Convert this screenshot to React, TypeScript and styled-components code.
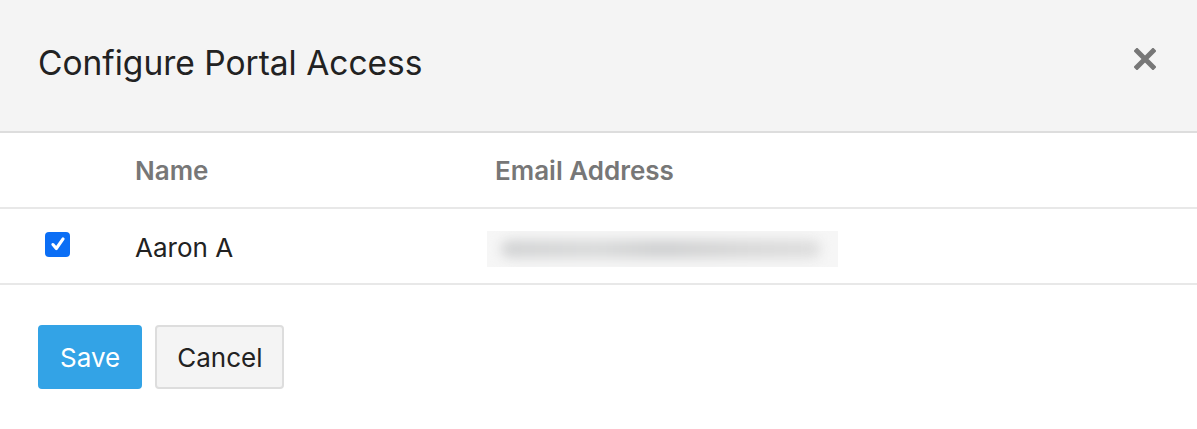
import React from 'react';
import styled, { createGlobalStyle } from 'styled-components';

const GlobalStyle = createGlobalStyle`
    html, body {
        margin: 0;
        padding: 0;
        background: #ffffff;
        font-family: Inter, "Noto Sans", sans-serif;
    }
`;

const Modal = styled.div`
    width: 1197px;
    height: 429px;
    background: #ffffff;
    display: flex;
    flex-direction: column;
`;

const ModalHeader = styled.div`
    height: 131px;
    background: #f4f4f4;
    border-bottom: 2px solid #dddddd;
    display: flex;
    align-items: center;
    justify-content: space-between;
    padding: 0 38px;
    box-sizing: content-box;
`;

const Title = styled.h2`
    margin: -5px 0 0;
    font-size: 33.5px;
    font-weight: 400;
    color: #222222;
`;

const CloseButton = styled.button`
    border: none;
    background: transparent;
    padding: 0;
    width: 24px;
    height: 24px;
    display: flex;
    align-items: center;
    justify-content: center;
    cursor: pointer;
    margin: -14px 2px 0 0;
`;

const Table = styled.div`
    display: flex;
    flex-direction: column;
`;

const Row = styled.div<{ $height: number }>`
    display: grid;
    grid-template-columns: 135px 360px 1fr;
    align-items: center;
    height: ${p => p.$height}px;
    border-bottom: 2px solid #e8e8e8;
    box-sizing: border-box;
`;

const HeadCell = styled.div`
    font-size: 26px;
    font-weight: 600;
    color: #777777;
`;

const Cell = styled.div`
    font-size: 26px;
    color: #222222;
    margin-top: 2px;
`;

const CheckCell = styled.div`
    padding-left: 45px;
    display: flex;
    align-items: center;
    margin-top: -4px;
`;

const CheckBox = styled.span`
    width: 25px;
    height: 25px;
    border-radius: 4px;
    background: #0b6ef5;
    display: flex;
    align-items: center;
    justify-content: center;
`;

const BlurWrap = styled.div`
    margin: 6px 0 0 -8px;
    width: 351px;
    height: 36px;
    background: #f6f6f6;
    overflow: hidden;
    display: flex;
    align-items: center;
`;

const BlurBar = styled.div`
    margin-left: 14px;
    width: 320px;
    height: 18px;
    border-radius: 9px;
    background: linear-gradient(90deg, #d2d3d4 0%, #d9dada 30%, #cfd0d1 50%, #d8d8d8 75%, #dedede 100%);
    filter: blur(6px);
`;

const Footer = styled.div`
    display: flex;
    gap: 13px;
    padding: 40px 38px 0;
`;

const Button = styled.button<{ $primary?: boolean }>`
    height: 64px;
    padding: 0 20px;
    font-family: Inter, "Noto Sans", sans-serif;
    font-size: 26px;
    border-radius: 4px;
    cursor: pointer;
    color: ${p => (p.$primary ? '#ffffff' : '#222222')};
    background: ${p => (p.$primary ? '#33a3e6' : '#f4f4f4')};
    border: 2px solid ${p => (p.$primary ? '#33a3e6' : '#dddddd')};
`;

const App: React.FC = () => {
    return (
        <Modal>
            <GlobalStyle />
            <ModalHeader>
                <Title>Configure Portal Access</Title>
                <CloseButton aria-label="Close">
                    <svg width="22" height="22" viewBox="0 0 22 22">
                        <path d="M3 3 L19 19 M19 3 L3 19" stroke="#777777" strokeWidth="5" strokeLinecap="square" />
                    </svg>
                </CloseButton>
            </ModalHeader>
            <Table>
                <Row $height={76}>
                    <div />
                    <HeadCell>Name</HeadCell>
                    <HeadCell>Email Address</HeadCell>
                </Row>
                <Row $height={76}>
                    <CheckCell>
                        <CheckBox>
                            <svg width="18" height="18" viewBox="0 0 16 16">
                                <path d="M3.5 8.5 L6.5 12 L12.5 3.5" stroke="#ffffff" strokeWidth="2.8" fill="none" strokeLinecap="round" strokeLinejoin="round" />
                            </svg>
                        </CheckBox>
                    </CheckCell>
                    <Cell>Aaron A</Cell>
                    <BlurWrap>
                        <BlurBar />
                    </BlurWrap>
                </Row>
            </Table>
            <Footer>
                <Button $primary>Save</Button>
                <Button>Cancel</Button>
            </Footer>
        </Modal>
    );
};

export default App;
